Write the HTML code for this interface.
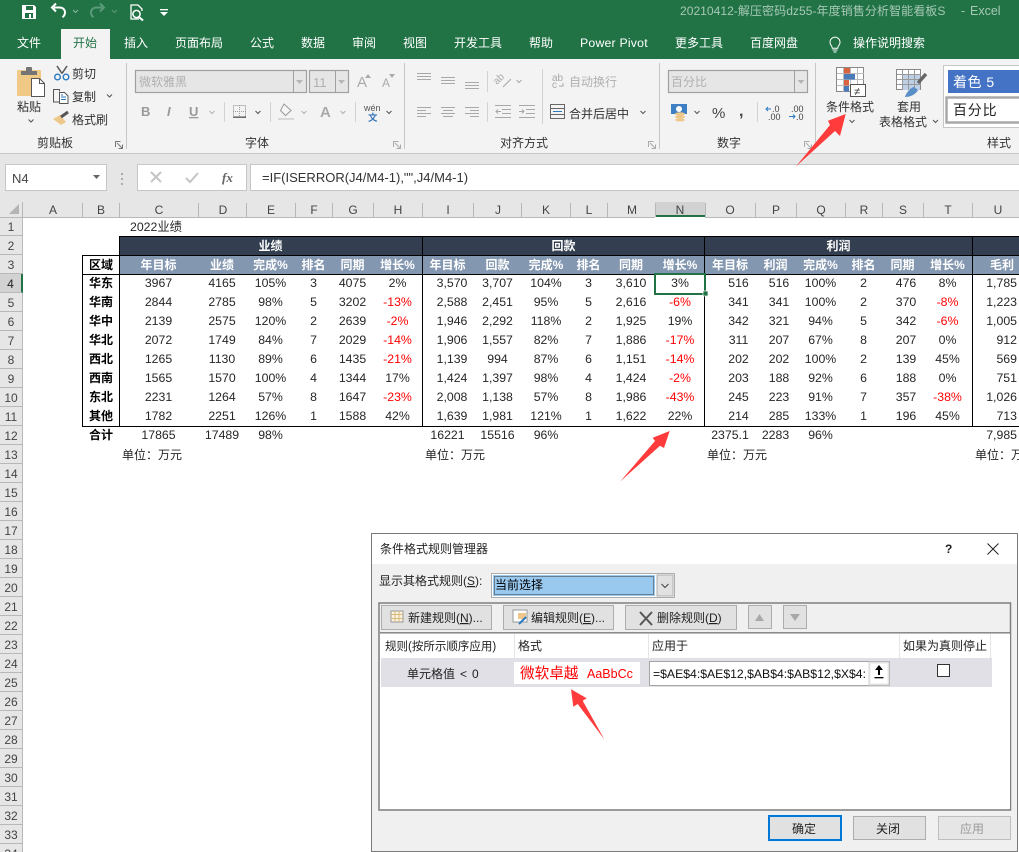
<!DOCTYPE html>
<html lang="zh">
<head>
<meta charset="utf-8">
<title>Excel</title>
<style>
html,body{margin:0;padding:0;background:#fff;width:1019px;height:852px;overflow:hidden}
body{position:relative;font-family:"Liberation Sans","Noto Sans CJK SC",sans-serif;color:#222}
#sheet{position:absolute;left:23px;top:217px;border-collapse:collapse;table-layout:fixed;width:1009px;font-size:12.3px;color:#262626}
#sheet td,#sheet th{padding:0;height:19px;line-height:19px;text-align:center;white-space:nowrap;overflow:hidden;font-weight:normal}
#sheet tr{height:19px}
#sheet th{font-weight:bold;font-size:12px;color:#000}
#sheet .h1 td,#sheet .h2 td,#sheet .h2 th,#sheet td.l{line-height:17px;vertical-align:bottom}
#sheet .h1 td{background:#333f50;color:#fff;font-weight:bold;font-size:12px}
#sheet .h1 td.n,#sheet .h2 td.n{background:transparent}
#sheet .h2 td{background:#8497b0;color:#fff;font-weight:bold;font-size:12px}
#sheet .r{color:#ff0000}
#sheet .d td:nth-child(9){padding-left:9px}
#sheet .d td:nth-child(15){padding-left:17px}
#sheet .d td:nth-child(16){padding-left:7px}
#sheet .d td:nth-child(19){padding-left:7px}
#sheet .d td:nth-child(21),#sheet .t td:nth-child(21){text-align:right;padding-right:15px}
#sheet .l{text-align:left!important;overflow:visible!important}
#rows{position:absolute;left:0;top:217px;width:23px;height:635px;overflow:hidden;background:#e6e6e6}
#rows div{height:18px;line-height:21px;overflow:hidden;border-bottom:1px solid #b8b8b8;border-right:1px solid #b8b8b8;width:22px;text-align:center;font-size:12px;color:#444}
#rows .s{background:#d2d2d2;border-right:2px solid #217346;width:21px;color:#222}
#art{position:absolute;left:0;top:0;width:1019px;height:852px}
#art text{font-family:"Liberation Sans","Noto Sans CJK SC",sans-serif;font-size:12px;fill:#444}
#art .w text,#art text.w{fill:#fff}
#art .g text{fill:#b0b0b0}
#art .k text{fill:#222}
#art .u{text-decoration:underline}
</style>
</head>
<body>
<div id="rows">
<div>1</div><div>2</div><div>3</div><div class="s">4</div><div>5</div><div>6</div><div>7</div><div>8</div><div>9</div><div>10</div><div>11</div><div>12</div><div>13</div><div>14</div><div>15</div><div>16</div><div>17</div><div>18</div><div>19</div><div>20</div><div>21</div><div>22</div><div>23</div><div>24</div><div>25</div><div>26</div><div>27</div><div>28</div><div>29</div><div>30</div><div>31</div><div>32</div><div>33</div><div>34</div>
</div>
<table id="sheet">
<colgroup><col style="width:60px"><col style="width:36px"><col style="width:79px"><col style="width:48px"><col style="width:49px"><col style="width:37px"><col style="width:41px"><col style="width:49px"><col style="width:51px"><col style="width:49px"><col style="width:48px"><col style="width:37px"><col style="width:48px"><col style="width:50px"><col style="width:50px"><col style="width:41px"><col style="width:49px"><col style="width:37px"><col style="width:41px"><col style="width:49px"><col style="width:60px"></colgroup>
<tr><td></td><td></td><td class="l" style="padding-left:11px">2022业绩</td><td colspan="18"></td></tr>
<tr class="h1"><td class="n"></td><td class="n"></td><td colspan="6">业绩</td><td colspan="6">回款</td><td colspan="6">利润</td><td></td></tr>
<tr class="h2"><td class="n"></td><th style="background:#fff">区域</th><td>年目标</td><td>业绩</td><td>完成%</td><td>排名</td><td>同期</td><td>增长%</td><td>年目标</td><td>回款</td><td>完成%</td><td>排名</td><td>同期</td><td>增长%</td><td>年目标</td><td>利润</td><td>完成%</td><td>排名</td><td>同期</td><td>增长%</td><td>毛利</td></tr>
<tr class="d"><td></td><th>华东</th><td>3967</td><td>4165</td><td>105%</td><td>3</td><td>4075</td><td>2%</td><td>3,570</td><td>3,707</td><td>104%</td><td>3</td><td>3,610</td><td>3%</td><td>516</td><td>516</td><td>100%</td><td>2</td><td>476</td><td>8%</td><td>1,785</td></tr>
<tr class="d"><td></td><th>华南</th><td>2844</td><td>2785</td><td>98%</td><td>5</td><td>3202</td><td class="r">-13%</td><td>2,588</td><td>2,451</td><td>95%</td><td>5</td><td>2,616</td><td class="r">-6%</td><td>341</td><td>341</td><td>100%</td><td>2</td><td>370</td><td class="r">-8%</td><td>1,223</td></tr>
<tr class="d"><td></td><th>华中</th><td>2139</td><td>2575</td><td>120%</td><td>2</td><td>2639</td><td class="r">-2%</td><td>1,946</td><td>2,292</td><td>118%</td><td>2</td><td>1,925</td><td>19%</td><td>342</td><td>321</td><td>94%</td><td>5</td><td>342</td><td class="r">-6%</td><td>1,005</td></tr>
<tr class="d"><td></td><th>华北</th><td>2072</td><td>1749</td><td>84%</td><td>7</td><td>2029</td><td class="r">-14%</td><td>1,906</td><td>1,557</td><td>82%</td><td>7</td><td>1,886</td><td class="r">-17%</td><td>311</td><td>207</td><td>67%</td><td>8</td><td>207</td><td>0%</td><td>912</td></tr>
<tr class="d"><td></td><th>西北</th><td>1265</td><td>1130</td><td>89%</td><td>6</td><td>1435</td><td class="r">-21%</td><td>1,139</td><td>994</td><td>87%</td><td>6</td><td>1,151</td><td class="r">-14%</td><td>202</td><td>202</td><td>100%</td><td>2</td><td>139</td><td>45%</td><td>569</td></tr>
<tr class="d"><td></td><th>西南</th><td>1565</td><td>1570</td><td>100%</td><td>4</td><td>1344</td><td>17%</td><td>1,424</td><td>1,397</td><td>98%</td><td>4</td><td>1,424</td><td class="r">-2%</td><td>203</td><td>188</td><td>92%</td><td>6</td><td>188</td><td>0%</td><td>751</td></tr>
<tr class="d"><td></td><th>东北</th><td>2231</td><td>1264</td><td>57%</td><td>8</td><td>1647</td><td class="r">-23%</td><td>2,008</td><td>1,138</td><td>57%</td><td>8</td><td>1,986</td><td class="r">-43%</td><td>245</td><td>223</td><td>91%</td><td>7</td><td>357</td><td class="r">-38%</td><td>1,026</td></tr>
<tr class="d"><td></td><th>其他</th><td>1782</td><td>2251</td><td>126%</td><td>1</td><td>1588</td><td>42%</td><td>1,639</td><td>1,981</td><td>121%</td><td>1</td><td>1,622</td><td>22%</td><td>214</td><td>285</td><td>133%</td><td>1</td><td>196</td><td>45%</td><td>713</td></tr>
<tr class="t"><td></td><th>合计</th><td>17865</td><td>17489</td><td>98%</td><td></td><td></td><td></td><td>16221</td><td>15516</td><td>96%</td><td></td><td></td><td></td><td>2375.1</td><td>2283</td><td>96%</td><td></td><td></td><td></td><td>7,985</td></tr>
<tr><td></td><td></td><td class="l" style="padding-left:3px;font-size:12px">单位：万元</td><td colspan="5"></td><td class="l" style="padding-left:3px;font-size:12px">单位：万元</td><td colspan="5"></td><td class="l" style="padding-left:2px;font-size:12px">单位：万元</td><td colspan="5"></td><td class="l" style="padding-left:3px;font-size:12px">单位：万元</td></tr>
</table>

<svg id="art" viewBox="0 0 1019 852" xmlns="http://www.w3.org/2000/svg">
<!-- sheet borders -->
<g fill="#000">
<rect x="119" y="236" width="900" height="1"/><rect x="83" y="255" width="936" height="1"/><rect x="83" y="274" width="936" height="1"/><rect x="83" y="426" width="936" height="1"/>
<rect x="82" y="255" width="1" height="172"/><rect x="119" y="236" width="1" height="191"/><rect x="422" y="236" width="1" height="191"/><rect x="704" y="236" width="1" height="191"/><rect x="972" y="236" width="1" height="191"/>
</g>
<rect x="655" y="274" width="50" height="20" fill="none" stroke="#217346" stroke-width="2"/>
<rect x="703" y="291" width="5" height="5" fill="#217346" stroke="#fff" stroke-width=".7"/>

<!-- column headers -->
<rect x="0" y="202" width="1019" height="15" fill="#e6e6e6"/>
<rect x="655" y="202" width="50" height="15" fill="#d2d2d2"/>
<rect x="655" y="215" width="50" height="2" fill="#217346"/>
<rect x="0" y="217" width="655" height="1" fill="#b8b8b8"/><rect x="705" y="217" width="314" height="1" fill="#b8b8b8"/>
<polygon points="19,204 19,214 9,214" fill="#b4b4b4"/>
<g fill="#b8b8b8"><rect x="22" y="202" width="1" height="15"/><rect x="82" y="203" width="1" height="14"/><rect x="119" y="203" width="1" height="14"/><rect x="198" y="203" width="1" height="14"/><rect x="246" y="203" width="1" height="14"/><rect x="295" y="203" width="1" height="14"/><rect x="332" y="203" width="1" height="14"/><rect x="373" y="203" width="1" height="14"/><rect x="422" y="203" width="1" height="14"/><rect x="473" y="203" width="1" height="14"/><rect x="521" y="203" width="1" height="14"/><rect x="570" y="203" width="1" height="14"/><rect x="607" y="203" width="1" height="14"/><rect x="655" y="203" width="1" height="14"/><rect x="705" y="203" width="1" height="14"/><rect x="755" y="203" width="1" height="14"/><rect x="796" y="203" width="1" height="14"/><rect x="845" y="203" width="1" height="14"/><rect x="882" y="203" width="1" height="14"/><rect x="923" y="203" width="1" height="14"/><rect x="972" y="203" width="1" height="14"/></g>
<g text-anchor="middle"><text x="53" y="214">A</text><text x="101" y="214">B</text><text x="159" y="214">C</text><text x="223" y="214">D</text><text x="271" y="214">E</text><text x="314" y="214">F</text><text x="353" y="214">G</text><text x="398" y="214">H</text><text x="448" y="214">I</text><text x="498" y="214">J</text><text x="546" y="214">K</text><text x="589" y="214">L</text><text x="632" y="214">M</text><text x="680" y="214">N</text><text x="730" y="214">O</text><text x="776" y="214">P</text><text x="821" y="214">Q</text><text x="864" y="214">R</text><text x="903" y="214">S</text><text x="948" y="214">T</text><text x="998" y="214">U</text></g>

<!-- title + tabs -->
<rect x="0" y="0" width="1019" height="59" fill="#217346"/>
<rect x="61" y="29" width="49" height="30" fill="#f3f3f3"/>
<text x="680" y="15" style="fill:#a6c8b4;font-size:12.100px">20210412-解压密码dz55-年度销售分析智能看板S</text>
<text x="961" y="15" style="fill:#a6c8b4;font-size:12.500px">-</text>
<text x="970" y="15" style="fill:#a6c8b4;font-size:12.500px">Excel</text>
<g class="w">
<text x="17" y="47">文件</text><text x="124" y="47">插入</text><text x="175" y="47">页面布局</text><text x="250" y="47">公式</text><text x="301" y="47">数据</text><text x="352" y="47">审阅</text><text x="403" y="47">视图</text><text x="454" y="47">开发工具</text><text x="529" y="47">帮助</text><text x="580" y="47" style="font-size:12.300px;letter-spacing:.2px">Power Pivot</text><text x="675" y="47">更多工具</text><text x="750" y="47">百度网盘</text><text x="853" y="47">操作说明搜索</text>
</g>
<text x="73" y="47" style="fill:#217346">开始</text>
<!-- bulb -->
<path d="M830 42a5 5 0 1 1 9 3.2c-1 1.2-1.3 2-1.3 3h-5.400c0-1-.4-1.800-1.300-3a5 5 0 0 1-1-3.200zM832.500 50h5M833.500 52h3" fill="none" stroke="#fff" stroke-width="1"/>
<!-- QAT -->
<path d="M22 5h12l2 2v12H22z" fill="#fff"/><rect x="26" y="6" width="7" height="4" fill="#217346"/><rect x="25" y="13" width="8" height="5" fill="#217346"/><rect x="29" y="14" width="2" height="4" fill="#fff"/>
<path d="M54 7.500h5.500c3.500 0 5.500 2.200 5.500 5 0 2-1 3.500-2.500 4.800M56 3.500L52 7.500l4 4" fill="none" stroke="#fff" stroke-width="2"/>
<path d="M73 10l2.500 2.500L78 10" fill="none" stroke="#8bb8a0" stroke-width="1"/>
<path d="M102 7.500h-5.500c-3.500 0-5.500 2.200-5.500 5 0 2 1 3.500 2.500 4.800M100 3.500l4 4-4 4" fill="none" stroke="#5a9a78" stroke-width="2"/>
<path d="M112 10l2.500 2.500L117 10" fill="none" stroke="#5a9a78" stroke-width="1"/>
<path d="M139 19h-8V5h7l4 4v2" fill="none" stroke="#fff" stroke-width="1.300"/><circle cx="136.500" cy="14" r="3.600" fill="none" stroke="#fff" stroke-width="1.500"/><path d="M139 17l4 3.500" stroke="#fff" stroke-width="2"/>
<rect x="160" y="9" width="8" height="1.300" fill="#fff"/><polygon points="160,12 168,12 164,16" fill="#fff"/>

<!-- ribbon -->
<rect x="0" y="59" width="1019" height="94" fill="#f3f3f3"/>
<rect x="0" y="153" width="1019" height="49" fill="#e6e6e6"/>
<rect x="0" y="153" width="1019" height="1" fill="#c9c9c9"/>
<g fill="#c6c6c6"><rect x="126" y="63" width="1" height="86"/><rect x="404" y="63" width="1" height="86"/><rect x="659" y="63" width="1" height="86"/><rect x="815" y="63" width="1" height="86"/></g>
<g fill="#d2d2d2"><rect x="224" y="102" width="1" height="20"/><rect x="270" y="102" width="1" height="20"/><rect x="355" y="102" width="1" height="20"/><rect x="487" y="71" width="1" height="21"/><rect x="487" y="102" width="1" height="20"/><rect x="542" y="69" width="1" height="55"/><rect x="757" y="102" width="1" height="20"/></g>

<!-- clipboard -->
<rect x="17" y="70" width="24" height="26" rx="1" fill="#f0c987"/>
<rect x="21" y="71" width="16" height="4" fill="#757575"/><rect x="26" y="67" width="6" height="5" rx="1" fill="#757575"/>
<path d="M31.500 78.500h8l5 5v13h-13z" fill="#fff" stroke="#555" stroke-width="1"/><path d="M39.500 78.500v5h5" fill="none" stroke="#555"/>
<text x="17" y="111" style="fill:#333;font-size:12px">粘贴</text>
<path d="M28.500 119.500l2.500 2.500 2.500-2.500" fill="none" stroke="#555"/>
<path d="M57 66l5 7.500M67 66l-5 7.500" stroke="#555" stroke-width="1.500"/><circle cx="57.500" cy="77" r="2.800" fill="none" stroke="#2b79c2" stroke-width="1.400"/><circle cx="66" cy="77" r="2.800" fill="none" stroke="#2b79c2" stroke-width="1.400"/>
<text x="72" y="78" style="fill:#333">剪切</text>
<path d="M59 102h-5.500V89.500h6l0 2" fill="none" stroke="#555"/><path d="M59.500 92.500h5l3.500 3.500v7.500h-8.500z" fill="#fff" stroke="#555"/><path d="M61 97h5M61 99.500h5M61 95h2" stroke="#2b79c2"/>
<text x="72" y="101" style="fill:#333">复制</text>
<path d="M107 94.500l2.500 2.500 2.500-2.500" fill="none" stroke="#555"/>
<polygon points="53,119 60,115 66,122 61,125" fill="#eec88a"/><path d="M61 117l7-5" stroke="#555" stroke-width="3"/>
<text x="72" y="124" style="fill:#333">格式刷</text>
<text x="37" y="147" style="fill:#333">剪贴板</text>
<g fill="none" stroke="#777" stroke-width="1"><path d="M115.500 147v-5.500h5M117 143l5 5M122.500 144.500v4h-4"/></g>
<g fill="none" stroke="#aaa" stroke-width="1"><path d="M393.500 147v-5.500h5M395 143l5 5M400.500 144.500v4h-4"/><path d="M648.500 147v-5.500h5M650 143l5 5M655.500 144.500v4h-4"/><path d="M804.500 147v-5.500h5M806 143l5 5M811.500 144.500v4h-4"/></g>

<!-- font -->
<rect x="135.500" y="70.500" width="171" height="22" fill="#e6e6e6" stroke="#a0a0a0" stroke-width="1.200"/><rect x="293" y="71" width="1" height="21" fill="#a0a0a0"/>
<polygon points="296,80 303,80 299.500,84" fill="#b5b5b5"/>
<rect x="309.500" y="70.500" width="39" height="22" fill="#e6e6e6" stroke="#a0a0a0" stroke-width="1.200"/><rect x="335" y="71" width="1" height="21" fill="#a0a0a0"/>
<polygon points="338,80 345,80 341.500,84" fill="#b5b5b5"/>
<g class="g"><text x="139" y="86">微软雅黑</text><text x="313" y="87" style="font-size:13px">11</text></g>
<text x="357" y="87" style="fill:#aaa;font-size:15px">A</text><polygon points="365,78 371,78 368,74" fill="#aaa"/>
<text x="382" y="87" style="fill:#aaa;font-size:12px">A</text><polygon points="389,74 395,74 392,78" fill="#aaa"/>
<text x="141" y="116" style="fill:#9a9a9a;font-size:13px;font-weight:bold">B</text>
<text x="167" y="116" style="fill:#9a9a9a;font-size:13px;font-weight:bold;font-style:italic">I</text>
<text x="189" y="116" style="fill:#9a9a9a;font-size:13px;font-weight:bold" class="u">U</text>
<path d="M209.500 111l2.500 2.500 2.500-2.500M301.500 111l2.500 2.500 2.500-2.500M340.500 111l2.500 2.500 2.500-2.500" fill="none" stroke="#b0b0b0"/>
<path d="M255.500 111l2.500 2.500 2.500-2.500M386.500 111l2.500 2.500 2.500-2.500" fill="none" stroke="#555"/>
<rect x="233.500" y="105.500" width="12" height="12" fill="none" stroke="#888" stroke-dasharray="1 1"/><path d="M239.500 105v12M233 111.500h13" stroke="#999" stroke-dasharray="1 1"/><rect x="233" y="116.500" width="13" height="1.300" fill="#555"/>
<path d="M284 104l7 6.500-5.500 5-5-5z" fill="#f6f6f6" stroke="#999"/><rect x="278" y="118" width="16" height="2" fill="#d8d8d8"/>
<text x="320" y="117" style="fill:#aaa;font-size:15px;font-weight:bold">A</text>
<text x="364" y="111" style="fill:#555;font-size:9px">wén</text>
<text x="368" y="121" style="fill:#3a76b8;font-size:9.500px;font-weight:bold">文</text>
<text x="245" y="147" style="fill:#333">字体</text>

<!-- alignment -->
<g stroke="#a8a8a8" stroke-width="1" fill="none">
<path d="M417 73.500h14M417 76.500h14M417 79.500h14"/><path d="M441 77.500h14M441 80.500h14M441 83.500h14"/><path d="M465 82.500h14M465 85.500h14M465 88.500h14"/>
<path d="M417 107.500h14M417 110.500h9M417 113.500h14M417 116.500h9"/><path d="M441 107.500h14M443 110.500h10M441 113.500h14M443 116.500h10"/><path d="M465 107.500h14M470 110.500h9M465 113.500h14M470 116.500h9"/>
<path d="M495 105.500h16M502 109.500h9M502 113.500h9M495 117.500h16M501 111.500h-5M498 109.500l-2 2 2 2"/><path d="M519 105.500h16M526 109.500h9M526 113.500h9M519 117.500h16M519 111.500h5M522 109.500l2 2-2 2"/>
<path d="M516.500 80l2.500 2.500 2.500-2.500"/>
<path d="M503 87l8-8"/>
</g>
<text x="0" y="0" transform="translate(497,85) rotate(-45)" style="fill:#a8a8a8;font-size:10px">ab</text>
<text x="552" y="81" style="fill:#a8a8a8;font-size:10px">ab</text><text x="552" y="88" style="fill:#a8a8a8;font-size:10px">c</text><path d="M563 83v3h-4" stroke="#a8a8a8" fill="none"/>
<text x="569" y="86" style="fill:#b0b0b0">自动换行</text>
<rect x="550.500" y="104.500" width="14" height="14" fill="none" stroke="#666"/><path d="M551 108.500h13M551 114.500h13" stroke="#666"/><path d="M553 111.500h9" stroke="#2b79c2"/>
<text x="569" y="118" style="fill:#333">合并后居中</text>
<path d="M640.500 111l2.500 2.500 2.500-2.500" fill="none" stroke="#555"/>
<text x="500" y="147" style="fill:#333">对齐方式</text>

<!-- number -->
<rect x="668.500" y="70.500" width="139" height="22" fill="#e6e6e6" stroke="#a0a0a0" stroke-width="1.200"/><rect x="794" y="71" width="1" height="21" fill="#a0a0a0"/>
<polygon points="797.500,80 804.500,80 801,84" fill="#b5b5b5"/>
<text x="671" y="86" style="fill:#b0b0b0">百分比</text>
<rect x="671" y="104" width="16" height="10" fill="#3f7fc4"/><circle cx="679" cy="109" r="3" fill="#fff"/><ellipse cx="680" cy="114" rx="5" ry="1.700" fill="#eec88a"/><ellipse cx="680" cy="117" rx="5" ry="1.700" fill="#eec88a"/><ellipse cx="680" cy="120" rx="5" ry="1.500" fill="#eec88a"/>
<path d="M694.500 111l2.500 2.500 2.500-2.500" fill="none" stroke="#555"/>
<text x="712" y="118" style="fill:#444;font-size:15px">%</text>
<text x="739" y="116" style="fill:#444;font-size:16px;font-weight:bold">,</text>
<text x="772" y="112" style="fill:#444;font-size:9px">.0</text><text x="768" y="120" style="fill:#444;font-size:9px">.00</text><path d="M771 109h-5M768 107l-2 2 2 2" fill="none" stroke="#2b79c2"/>
<text x="791" y="112" style="fill:#444;font-size:9px">.00</text><text x="796" y="120" style="fill:#444;font-size:9px">.0</text><path d="M789 116.500h6M793 114.500l2 2-2 2" fill="none" stroke="#2b79c2"/>
<text x="717" y="147" style="fill:#333">数字</text>

<!-- conditional format -->
<rect x="836.500" y="67.500" width="27" height="24" fill="#fff" stroke="#888"/>
<path d="M843.500 68v24M850.500 68v24M857.500 68v24M837 73.500h27M837 79.500h27M837 85.500h27" stroke="#bbb" fill="none"/>
<rect x="844" y="68" width="6" height="5.500" fill="#d9623f"/><rect x="844" y="74" width="11" height="5.500" fill="#4a7ab8"/><rect x="844" y="80" width="5" height="5.500" fill="#d9623f"/><rect x="844" y="86" width="5" height="5.500" fill="#4a7ab8"/>
<rect x="850.500" y="84.500" width="15" height="12" fill="#fff" stroke="#555"/>
<text x="854" y="95" style="fill:#333;font-size:11px">≠</text>
<text x="826" y="111" style="fill:#333">条件格式</text>
<path d="M849.500 120l2.500 2.500 2.500-2.500" fill="none" stroke="#555"/>
<!-- table format -->
<rect x="896.500" y="69.500" width="24" height="20" fill="#fff" stroke="#888"/>
<rect x="902" y="74" width="18" height="16" fill="#bdd0e6"/>
<path d="M902.500 70v20M908.500 70v20M914.500 70v20M897 74.500h24M897 79.500h24M897 84.500h24" stroke="#999" fill="none"/>
<path d="M918 83l8-9" stroke="#666" stroke-width="3.500"/><path d="M905 97c1-4 5-9 9-10l4 3c-2 4-7 7-13 7z" fill="#5b8fc7"/>
<text x="897" y="111" style="fill:#333">套用</text><text x="879" y="126" style="fill:#333">表格格式</text>
<path d="M933 120l2.500 2.500 2.500-2.500" fill="none" stroke="#555"/>
<!-- styles -->
<rect x="943.500" y="65.500" width="80" height="62" fill="#fff" stroke="#c6c6c6"/>
<rect x="948" y="70" width="71" height="23" fill="#4472c4"/>
<text x="953" y="87" style="fill:#fff;font-size:14px;letter-spacing:.5px">着色 5</text>
<rect x="946.500" y="97.500" width="76" height="25" fill="#fff" stroke="#a9a9a9" stroke-width="2.500"/>
<text x="953" y="115" style="fill:#222;font-size:14px;letter-spacing:.8px">百分比</text>
<text x="987" y="147" style="fill:#333">样式</text>

<!-- formula bar -->
<rect x="5.500" y="164.500" width="101" height="26" fill="#fff" stroke="#c6c6c6"/>
<text x="12" y="183" style="fill:#444;font-size:13px">N4</text>
<polygon points="93,175 100,175 96.500,179" fill="#666"/>
<g fill="#aaa"><rect x="121" y="173" width="2" height="2"/><rect x="121" y="178" width="2" height="2"/><rect x="121" y="183" width="2" height="2"/></g>
<rect x="137.500" y="164.500" width="109" height="26" fill="#fff" stroke="#c6c6c6"/>
<path d="M151 172l10 10M161 172l-10 10" stroke="#c4c4c4" stroke-width="2"/>
<path d="M186 178l4 4 8-9" fill="none" stroke="#c4c4c4" stroke-width="2"/>
<text x="222" y="182" style="fill:#666;font-size:13px;font-style:italic;font-family:'Liberation Serif',serif;font-weight:bold">fx</text>
<rect x="250.500" y="164.500" width="770" height="26" fill="#fff" stroke="#c6c6c6"/>
<text x="262" y="182" style="fill:#333;font-size:13px">=IF(ISERROR(J4/M4-1),"",J4/M4-1)</text>

<!-- red arrows top -->
<polygon points="795.700,166.700 830,125 828,120.700 845.700,114 840,136 835,131" fill="#ff3b3b"/>
<polygon points="620,481.700 655,441 652.700,437.700 669.700,431 664,448 660,445.700" fill="#ff3b3b"/>

<!-- dialog -->
<rect x="371.500" y="533.500" width="646" height="318" fill="#f0f0f0" stroke="#7a7a7a"/>
<rect x="372" y="534" width="645" height="30" fill="#fff"/>
<text x="380" y="553" style="fill:#222">条件格式规则管理器</text>
<text x="945" y="553" style="fill:#222;font-size:12px;font-weight:bold">?</text>
<path d="M987.500 543.500l11 11M998.500 543.500l-11 11" stroke="#222" stroke-width="1"/>
<text x="379" y="585" style="fill:#222">显示其格式规则(<tspan class="u">S</tspan>):</text>
<rect x="491.500" y="573.500" width="183" height="24" fill="#fff" stroke="#adadad"/>
<rect x="493" y="575" width="162" height="21" fill="#99c9ef"/>
<rect x="494.500" y="576.500" width="159" height="18" fill="none" stroke="#333" stroke-dasharray="1 1"/>
<rect x="657" y="575" width="16" height="21" fill="#e1e1e1" stroke="#adadad"/>
<path d="M661.500 584l3.500 3.500 3.500-3.500" fill="none" stroke="#444"/>
<text x="495" y="589" style="fill:#000">当前选择</text>

<rect x="379" y="603" width="631.500" height="207" fill="#f0f0f0" stroke="#7f7f7f" stroke-width="1.500"/>
<rect x="380" y="634" width="630" height="175" fill="#fff"/>
<rect x="380" y="632" width="630" height="1.500" fill="#8a8a8a"/>
<g fill="#e1e1e1" stroke="#adadad">
<rect x="381.500" y="605.500" width="110" height="24"/><rect x="503.500" y="605.500" width="110" height="24"/><rect x="625.500" y="605.500" width="111" height="24"/><rect x="748.500" y="605.500" width="23" height="23"/><rect x="783.500" y="605.500" width="23" height="23"/>
</g>
<rect x="391" y="611" width="12" height="11" fill="#fbf3e0" stroke="#999"/><path d="M395 611v11M399 611v11M391 614.500h12M391 618.500h12" stroke="#d7b878"/>
<text x="408" y="622" style="fill:#222">新建规则(<tspan class="u">N</tspan>)...</text>
<rect x="513" y="610" width="14" height="12" fill="#fff" stroke="#999"/><rect x="518" y="613" width="8" height="6" fill="#eec88a"/><path d="M519 624l7-7" stroke="#2b79c2" stroke-width="2"/>
<text x="531" y="622" style="fill:#222">编辑规则(<tspan class="u">E</tspan>)...</text>
<path d="M640 612l12 13M652 612l-12 13" stroke="#555" stroke-width="2"/>
<text x="657" y="622" style="fill:#222">删除规则(<tspan class="u">D</tspan>)</text>
<polygon points="755,621 764,621 759.500,614" fill="#a8a8a8"/><polygon points="790,614 800,614 795,621" fill="#a8a8a8"/>

<rect x="514" y="634" width="1" height="24" fill="#e5e5e5"/><rect x="648" y="634" width="1" height="24" fill="#e5e5e5"/><rect x="899" y="634" width="1" height="24" fill="#e5e5e5"/><rect x="990" y="634" width="1" height="24" fill="#e5e5e5"/>
<text x="385" y="650" style="fill:#222;font-size:11.500px">规则(按所示顺序应用)</text>
<text x="518" y="650" style="fill:#222">格式</text>
<text x="652" y="650" style="fill:#222">应用于</text>
<text x="903" y="650" style="fill:#222">如果为真则停止</text>

<rect x="381" y="658" width="611" height="29" fill="#e0e0e6"/>
<text x="407" y="678" style="fill:#222">单元格值</text><text x="460" y="678" style="fill:#222">&lt;</text><text x="472" y="678" style="fill:#222">0</text>
<rect x="514" y="662" width="126" height="22" fill="#fff"/>
<text x="520" y="678" style="fill:#ff0000;font-size:14.600px">微软卓越</text>
<text x="587" y="678" style="fill:#ff0000;font-size:12.500px">AaBbCc</text>
<rect x="649.500" y="661.500" width="240" height="24" fill="#fff" stroke="#a5a5a5"/>
<text x="653" y="678" textLength="213" lengthAdjust="spacingAndGlyphs" style="fill:#111;font-size:12px">=$AE$4:$AE$12,$AB$4:$AB$12,$X$4:</text>
<rect x="869" y="662" width="20" height="23" fill="#f2f2f2" stroke="#d0d0d0"/>
<rect x="871" y="664" width="16" height="19" fill="#fff"/>
<path d="M879 675v-6" stroke="#000" stroke-width="2"/><polygon points="875,670 883,670 879,665" fill="#000"/><rect x="874.500" y="677" width="9" height="1.300" fill="#000"/>
<rect x="937.500" y="664.500" width="12" height="12" fill="#fff" stroke="#333"/>

<rect x="769" y="816" width="72" height="24" fill="#e1e1e1" stroke="#0078d7" stroke-width="2"/>
<text x="792" y="833" style="fill:#222">确定</text>
<rect x="853.500" y="816.500" width="72" height="23" fill="#e1e1e1" stroke="#adadad"/>
<text x="876" y="833" style="fill:#222">关闭</text>
<rect x="938.500" y="816.500" width="72" height="23" fill="#e6e6e6" stroke="#bfbfbf"/>
<text x="960" y="833" style="fill:#9a9a9a">应用</text>

<polygon points="604.300,739.300 577.700,704 573.300,706.700 571,689.300 586.700,698.300 582.700,700.700" fill="#ff3b3b"/>
</svg>
</body>
</html>
